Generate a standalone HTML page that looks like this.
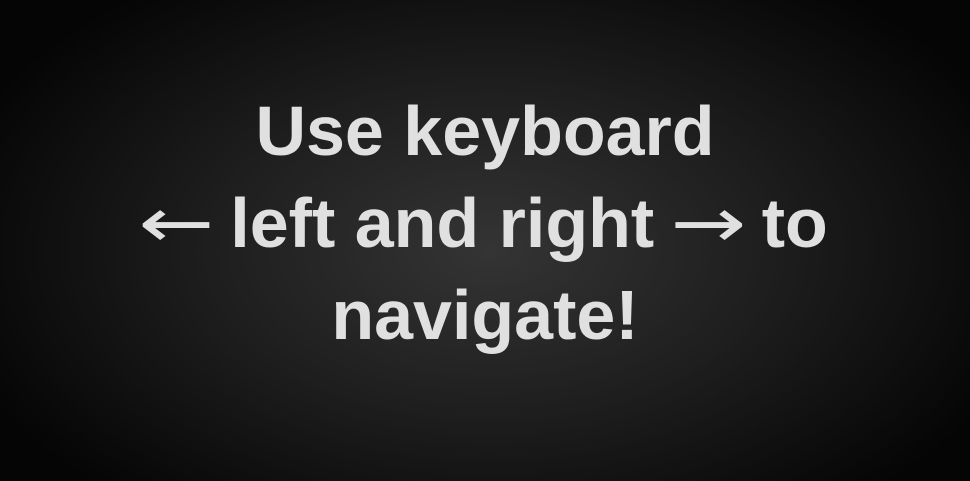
<!DOCTYPE html>
<html><head><style>
html,body{margin:0;padding:0;}
body{width:970px;height:481px;overflow:hidden;background:radial-gradient(ellipse 560px 330px at 490px 250px,#343434 0%,#1e1e1e 50%,#050505 100%);position:relative;}
.t{position:absolute;left:0;top:85px;width:970px;text-align:center;font-family:"Liberation Sans",sans-serif;font-weight:bold;font-size:70px;line-height:92px;color:#e0e0e0;}
.ar{font-family:"DejaVu Sans",sans-serif;font-weight:normal;display:inline-block;transform:scaleX(1.3);margin:0 5px;vertical-align:baseline;}
</style></head><body>
<div class="t">Use keyboard<br><span class="ar">←</span> left and right <span class="ar">→</span> to<br>navigate!</div>
</body></html>
